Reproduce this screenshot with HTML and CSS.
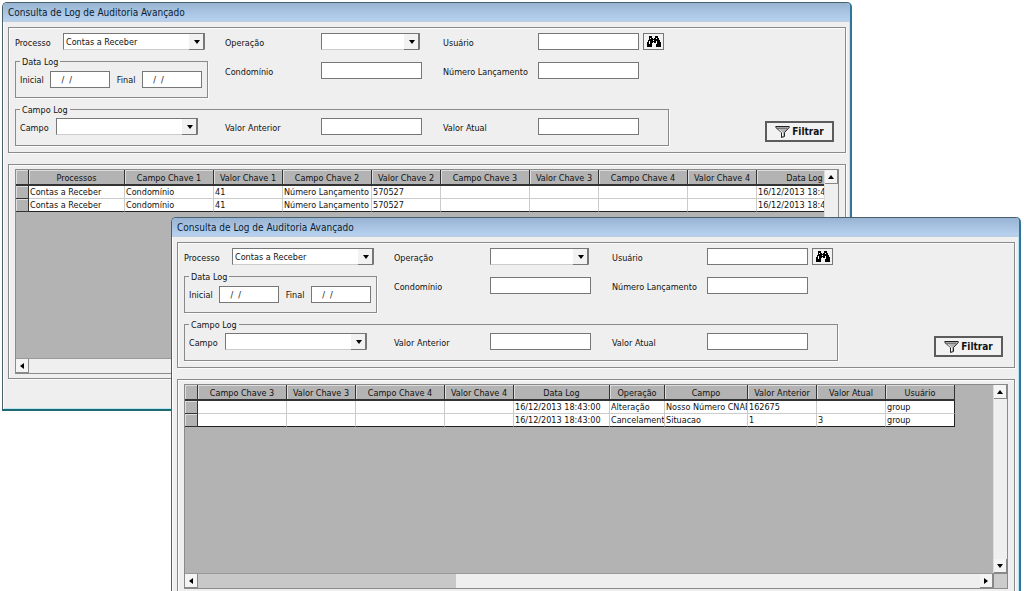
FILE: index.html
```html
<!DOCTYPE html>
<html lang="pt-BR">
<head>
<meta charset="utf-8">
<title>Consulta de Log de Auditoria Avançado</title>
<link rel="stylesheet" href="styles.css">
</head>
<body>
<svg class="defs" aria-hidden="true">
  <symbol id="binoculars" viewBox="0 0 15 13">
    <path d="M3 1h3v2h1v1h1V3h1V1h3v2h1v2h1v2h1v5h-5V8H8V7H7v1H6v4H1V7h1V5h1V3h0z"/>
    <path fill="#fff" d="M4 3h1v1H4zM10 3h1v1h-1zM3 6h1v3H3zM10 6h1v3h-1zM7 5h1v1H7z"/>
  </symbol>
  <symbol id="funnel" viewBox="0 0 15 13">
    <path fill="#b4b4b4" stroke="#222" d="M.8 1.500h13.400v1L9.500 7.500v4l-3 1v-5L.8 2.500z"/>
    <path stroke="#555" stroke-width=".8" d="M3 3.300h9"/>
    <path stroke="#fff" d="M4 4.300l3.500 3.500v3.200" fill="none"/>
  </symbol>
</svg>
<main class="desktop">
  <section class="window window-back">
    <h1 class="titlebar">Consulta de Log de Auditoria Avançado</h1>
    <form class="panel filters">
      <div class="filters-top">
        <div class="filters-left">
          <div class="line"><label class="w48" for="a-proc">Processo</label><span class="combo"><select id="a-proc"><option>Contas a Receber</option></select></span></div>
          <fieldset class="dates"><legend>Data Log</legend>
            <label for="a-ini">Inicial</label><input id="a-ini" type="text" value="  /  /">
            <label for="a-fim">Final</label><input id="a-fim" type="text" value="  /  /">
          </fieldset>
        </div>
        <div class="fields">
          <label for="a-op">Operação</label><span class="combo short"><select id="a-op"><option></option></select></span>
          <label for="a-usr">Usuário</label><span class="search"><input id="a-usr" type="text"><button type="button" class="find" aria-label="Procurar usuário"><svg><use href="#binoculars"/></svg></button></span>
          <label for="a-cond">Condomínio</label><input id="a-cond" type="text">
          <label for="a-num">Número Lançamento</label><input id="a-num" type="text">
        </div>
      </div>
      <div class="filters-bottom">
        <fieldset class="campo"><legend>Campo Log</legend>
          <div class="line campo-pick"><label class="w36" for="a-campo">Campo</label><span class="combo"><select id="a-campo"><option></option></select></span></div>
          <div class="fields">
            <label for="a-ant">Valor Anterior</label><input id="a-ant" type="text">
            <label for="a-atu">Valor Atual</label><input id="a-atu" type="text">
          </div>
        </fieldset>
        <button type="button" class="filter"><svg><use href="#funnel"/></svg>Filtrar</button>
      </div>
    </form>
    <div class="panel results">
      <div class="sheet">
        <div class="view">
          <table>
            <colgroup><col class="c-sel"><col class="c-date"><col class="c-key"><col class="c-val"><col class="c-key"><col class="c-val"><col class="c-key"><col class="c-val"><col class="c-key"><col class="c-val"><col class="c-date"></colgroup>
            <thead><tr><th></th><th>Processos</th><th>Campo Chave 1</th><th>Valor Chave 1</th><th>Campo Chave 2</th><th>Valor Chave 2</th><th>Campo Chave 3</th><th>Valor Chave 3</th><th>Campo Chave 4</th><th>Valor Chave 4</th><th>Data Log</th></tr></thead>
            <tbody>
              <tr><th></th><td>Contas a Receber</td><td>Condomínio</td><td>41</td><td>Número Lançamento</td><td>570527</td><td></td><td></td><td></td><td></td><td>16/12/2013 18:43:00</td></tr>
              <tr><th></th><td>Contas a Receber</td><td>Condomínio</td><td>41</td><td>Número Lançamento</td><td>570527</td><td></td><td></td><td></td><td></td><td>16/12/2013 18:43:00</td></tr>
            </tbody>
          </table>
        </div>
        <div class="vbar"><button type="button" class="up" aria-label="Subir"></button><button type="button" class="down" aria-label="Descer"></button></div>
        <div class="hbar"><button type="button" class="prev" aria-label="Esquerda"></button><span class="track"></span><button type="button" class="next" aria-label="Direita"></button></div>
        <div class="corner"></div>
      </div>
    </div>
  </section>

  <section class="window window-front">
    <h1 class="titlebar">Consulta de Log de Auditoria Avançado</h1>
    <form class="panel filters">
      <div class="filters-top">
        <div class="filters-left">
          <div class="line"><label class="w48" for="b-proc">Processo</label><span class="combo"><select id="b-proc"><option>Contas a Receber</option></select></span></div>
          <fieldset class="dates"><legend>Data Log</legend>
            <label for="b-ini">Inicial</label><input id="b-ini" type="text" value="  /  /">
            <label for="b-fim">Final</label><input id="b-fim" type="text" value="  /  /">
          </fieldset>
        </div>
        <div class="fields">
          <label for="b-op">Operação</label><span class="combo short"><select id="b-op"><option></option></select></span>
          <label for="b-usr">Usuário</label><span class="search"><input id="b-usr" type="text"><button type="button" class="find" aria-label="Procurar usuário"><svg><use href="#binoculars"/></svg></button></span>
          <label for="b-cond">Condomínio</label><input id="b-cond" type="text">
          <label for="b-num">Número Lançamento</label><input id="b-num" type="text">
        </div>
      </div>
      <div class="filters-bottom">
        <fieldset class="campo"><legend>Campo Log</legend>
          <div class="line campo-pick"><label class="w36" for="b-campo">Campo</label><span class="combo"><select id="b-campo"><option></option></select></span></div>
          <div class="fields">
            <label for="b-ant">Valor Anterior</label><input id="b-ant" type="text">
            <label for="b-atu">Valor Atual</label><input id="b-atu" type="text">
          </div>
        </fieldset>
        <button type="button" class="filter"><svg><use href="#funnel"/></svg>Filtrar</button>
      </div>
    </form>
    <div class="panel results">
      <div class="sheet">
        <div class="view">
          <table>
            <colgroup><col class="c-sel"><col class="c-key"><col class="c-val"><col class="c-key"><col class="c-val"><col class="c-date"><col class="c-op"><col class="c-field"><col class="c-val"><col class="c-val"><col class="c-val"></colgroup>
            <thead><tr><th></th><th>Campo Chave 3</th><th>Valor Chave 3</th><th>Campo Chave 4</th><th>Valor Chave 4</th><th>Data Log</th><th>Operação</th><th>Campo</th><th>Valor Anterior</th><th>Valor Atual</th><th>Usuário</th></tr></thead>
            <tbody>
              <tr><th></th><td></td><td></td><td></td><td></td><td>16/12/2013 18:43:00</td><td>Alteração</td><td>Nosso Número CNAB</td><td>162675</td><td></td><td>group</td></tr>
              <tr><th></th><td></td><td></td><td></td><td></td><td>16/12/2013 18:43:00</td><td>Cancelament</td><td>Situacao</td><td>1</td><td>3</td><td>group</td></tr>
            </tbody>
          </table>
        </div>
        <div class="vbar"><button type="button" class="up" aria-label="Subir"></button><button type="button" class="down" aria-label="Descer"></button></div>
        <div class="hbar"><button type="button" class="prev" aria-label="Esquerda"></button><span class="track scrolled"></span><button type="button" class="next" aria-label="Direita"></button></div>
        <div class="corner"></div>
      </div>
    </div>
  </section>
</main>
</body>
</html>
```
FILE: styles.css
```css
* { box-sizing: border-box; }
body { margin: 0; background: #fff; color: #111; font: 9px/12px "DejaVu Sans Condensed", "DejaVu Sans", sans-serif; }
button, input, select { font: inherit; color: inherit; margin: 0; padding: 0; border-radius: 0; }
.defs { display: none; }
.desktop { position: relative; height: 100vh; overflow: hidden; }

.window { position: absolute; width: calc(100% - 174px); padding-bottom: 30px; background: #efefef; border: 1px solid #46606c; border-right: 2px solid #2f7499; border-bottom: 2px solid #1c6b73; border-radius: 5px 5px 0 0; box-shadow: inset 1px 0 #fff, inset -1px -1px #b8e6f5; }
.window-back { left: 2px; top: 2px; }
.window-front { left: 171px; top: 217px; }
.titlebar { margin: 0; height: 19px; padding-left: 5px; border-radius: 4px 4px 0 0; background: linear-gradient(#98b4d2, #b4d0ee 85%, #bccde2); font: 10px/19px "DejaVu Sans Condensed", "DejaVu Sans", sans-serif; color: #0c1c30; }

.panel { margin: 5px 4px 0 5px; border: 1px solid #8a8a8a; box-shadow: inset 1px 1px #fcfcfc, 1px 1px #fcfcfc; padding: 5px 6px; }
.filters { height: 126px; }
.filters-top { display: flex; gap: 17px; }
.filters-left { width: 193px; }
.filters label { padding-top: 2px; }
.line { display: flex; align-items: center; }
.w48 { width: 48px; }
.w36 { width: 36px; }
.combo { position: relative; display: block; width: 142px; height: 17px; }
.combo.short { width: 99px; }
.combo select { display: block; appearance: none; width: 100%; height: 17px; padding: 1px 0 0 2px; background: #fff; border: 1px solid #777; border-bottom-color: #ccc; line-height: 14px; }
.combo::before { content: ""; position: absolute; right: 1px; top: 1px; width: 14px; height: 15px; background: #f2f2f2; border: solid #777; border-width: 0 1px 1px 0; pointer-events: none; }
.combo::after { content: ""; position: absolute; right: 5px; top: 7px; border: solid transparent; border-width: 4px 3px 0; border-top-color: #000; pointer-events: none; }

fieldset { min-width: 0; margin: 0; padding: 0 4px; border: 1px solid #8a8a8a; box-shadow: 1px 1px #fcfcfc; }
legend { padding: 1px 2px 0; line-height: 12px; }
.dates { display: flex; align-items: center; justify-content: space-between; height: 43px; margin-top: 5px; padding: 0 5px 7px 4px; }
input { height: 17px; width: 101px; background: #fff; border: 1px solid #777; }
.dates input { width: 60px; padding: 1px 0 0 5px; white-space: pre; }
.fields { display: grid; grid-template-columns: 96px 122px 95px auto; row-gap: 12px; align-items: center; align-content: start; }
.search { display: flex; gap: 4px; }
.find { display: grid; place-items: center; width: 21px; height: 17px; background: #f2f2f2; border: 1px solid #777; }
.find svg { width: 15px; height: 13px; }
.filters-bottom { display: flex; justify-content: space-between; align-items: flex-end; padding-right: 5px; margin-top: 5px; }
.campo { display: flex; gap: 27px; width: 654px; height: 43px; align-items: center; padding-bottom: 8px; }
.filter { display: flex; align-items: center; justify-content: center; gap: 2px; width: 69px; height: 21px; margin-bottom: 4px; background: #f2f2f2; border: 2px solid #5c5c5c; font-size: 10px; font-weight: bold; }
.filter svg { width: 15px; height: 13px; }

.results { margin-top: 11px; padding: 4px 6px; }
.sheet { display: grid; grid-template-columns: minmax(0, 1fr) 14px; grid-template-rows: 188px 15px; border: 1px solid #8a8a8a; background: #b3b3b3; }
.view { overflow: hidden; }
table { table-layout: fixed; width: 0; border-collapse: separate; border-spacing: 0; }
.c-sel { width: 13px; }
.c-date { width: 96px; }
.c-key { width: 89px; }
.c-val { width: 69px; }
.c-op { width: 55px; }
.c-field { width: 83px; }
th, td { overflow: hidden; white-space: nowrap; text-align: left; font-weight: normal; line-height: 11px; }
th { background: #b3b3b3; border: solid #333; border-width: 0 1px 1px 0; box-shadow: inset 1px 1px #ddd; }
thead th { height: 16px; padding: 2px 0 0; text-align: center; border-bottom-width: 2px; }
tbody th { padding: 0; }
td { height: 13px; padding: 1px 0 0 1px; background: #fff; border: solid #ccc; border-width: 0 1px 1px 0; }
tbody tr:last-child td { border-bottom-color: #222; }
td:last-child { border-right-color: #222; }
.vbar { display: flex; flex-direction: column; justify-content: space-between; background: #efefef; border-left: 1px solid #ddd; }
.hbar { display: flex; border-top: 1px solid #999; background: #efefef; }
.track { flex: 1; background: #efefef; }
.track.scrolled { background: linear-gradient(90deg, #c8c8c8 33%, #efefef 33%); }
.corner { background: #ccc; border: solid #888; border-width: 1px 0 0 1px; }
.vbar button, .hbar button { display: grid; place-items: center; width: 13px; height: 14px; background: #f4f4f4; border: solid #888; border-width: 0 1px 1px 0; }
.vbar button::before, .hbar button::before { content: ""; border: 3px solid transparent; }
.vbar .up::before { border-width: 0 3px 4px; border-bottom-color: #000; }
.vbar .down::before { border-width: 4px 3px 0; border-top-color: #000; }
.hbar .prev::before { border-width: 3px 4px 3px 0; border-right-color: #000; }
.hbar .next::before { border-width: 3px 0 3px 4px; border-left-color: #000; }
```
